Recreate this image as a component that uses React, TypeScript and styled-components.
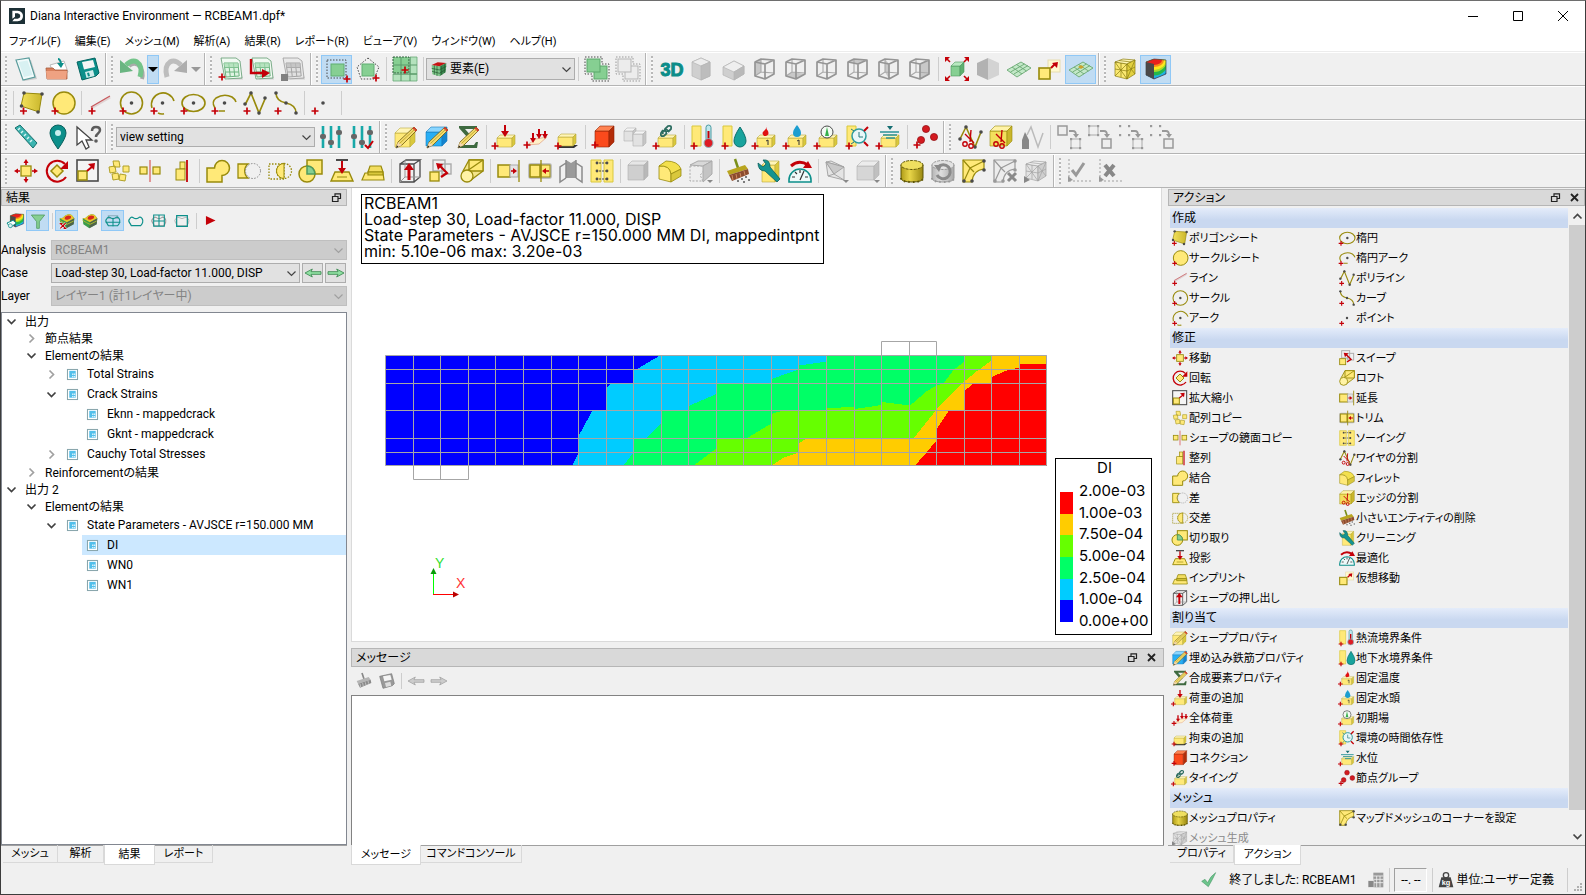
import React from "react";
import styled, { createGlobalStyle, css } from "styled-components";

/* ---------- palette ---------- */
const Y = "#ffe978";
const YD = "#d9c83c";
const YS = "#988a0c";
const R = "#c40008";
const T = "#0c8f8a";
const N = "#4a4a4a";
const GR = "#86cf92";
const G1 = "#e2e2e2";
const G2 = "#c6c6c6";

const uiFont = 'Roboto, "Noto Sans CJK JP", sans-serif';
const listFont = '"Liberation Sans", "Noto Sans CJK JP", sans-serif';
const sceneFont = 'Inter, "Liberation Sans", sans-serif';

const GlobalStyle = createGlobalStyle`
  * { box-sizing: border-box; }
  html, body { margin: 0; height: 100%; }
  body { font-family: ${uiFont}; font-size: 12px; line-height: 16px; color: #000; font-feature-settings: "palt"; background: #f0f0f0; overflow: hidden; }
  button, select, textarea { font: inherit; font-feature-settings: inherit; color: inherit; margin: 0; padding: 0; border: 0; background: none; border-radius: 0; }
  ul { list-style: none; margin: 0; padding: 0; }
  h1, h2 { margin: 0; font: inherit; }
`;

/* ---------- icon building blocks ---------- */
const Plus = ({ x = 3, y = 20 }: { x?: number; y?: number }) => (
  <path d={`M${x - 3.5} ${y}h7M${x} ${y - 3.5}v7`} stroke={R} strokeWidth="1.7" fill="none" />
);
const Dot = ({ x, y, r = 1.8, c = N }: { x: number; y: number; r?: number; c?: string }) => <circle cx={x} cy={y} r={r} fill={c} />;

const Block = ({ x, y, w, h, d = 4, c = [Y, "#fff5b8", YD, "#b8a93a"] }: { x: number; y: number; w: number; h: number; d?: number; c?: string[] }) => (
  <g stroke={c[3]} strokeWidth="0.6" strokeLinejoin="round">
    <path d={`M${x} ${y + d}h${w}v${h}h${-w}z`} fill={c[0]} />
    <path d={`M${x} ${y + d}l${d} ${-d}h${w}l${-d} ${d}z`} fill={c[1]} />
    <path d={`M${x + w} ${y + d}l${d} ${-d}v${h}l${-d} ${d}z`} fill={c[2]} />
  </g>
);
const grey = [G1, "#f4f4f4", G2, "#b4b4b4"];

const Arrow = ({ d, head, c = R, w = 2 }: { d: string; head: string; c?: string; w?: number }) => (
  <g>
    <path d={d} stroke={c} strokeWidth={w} fill="none" />
    <path d={head} fill={c} />
  </g>
);
const Sheet = ({ grey: g }: { grey?: boolean }) => (
  <g>
    <path d="M5 3.5h14l5 19H9z" fill="#bbb" opacity=".6" />
    <path d="M2 1h15l4 3 2 17-17 1z" fill={g ? "#e9e9e9" : "#f1faf2"} stroke={g ? "#9b9b9b" : "#5f9a70"} strokeWidth=".8" />
    <path d="M5 6h14l1.200 13L7 20z" fill={g ? "#e0e0e0" : "#dff3e3"} />
    <path d="M5 6h14M5.600 10.500h13.800M6.200 15h13.600M7 20l13.200-1M5 6l2 14M9.700 6l1.600 13.700M14.400 6l1.400 13.300M19 6l1.200 13" stroke={g ? "#a5a5a5" : "#6bb47f"} fill="none" strokeWidth="1" />
    <path d="M5 6h14l.400 4.500H5.600z" fill={g ? "#bbb" : "#a5dbb0"} opacity=".7" />
  </g>
);
const Wire = ({ face }: { face?: string }) => (
  <g fill="none" stroke="#959595" strokeWidth="1.7" strokeLinejoin="round">
    {face && <path d={face} fill="#c8c8c8" stroke="none" />}
    <path d="M8 2v13l13 1M8 15l-6 4" stroke="#aaa" strokeWidth="1.100" />
    <path d="M2 5l10 2v15L2 19zM2 5l6-3 13 1v14l-9 5M12 7l9-4" />
  </g>
);
const Pencil = () => (
  <g>
    <path d="M2 23l2-6L20 2l3 3L8 20z" fill="#f4dd70" stroke="#6d5a10" strokeWidth=".8" />
    <path d="M2 23l2-6 4 3z" fill="#f5d9b0" />
    <path d="M2 23l1-2.500 1.500 1.200z" fill="#222" />
    <path d="M18.500 3.500L20 2l3 3-1.500 1.500z" fill="#d33" />
    <path d="M5.500 18.500L21 4" stroke="#b79a20" strokeWidth=".8" />
  </g>
);
const Dotted = ({ d }: { d: string }) => <path d={d} fill="none" stroke={YS} strokeWidth="1.3" strokeDasharray="1.500 1.500" />;
const Plane = () => (
  <g>
    <path d="M0 13L14 5l10 6-14 9z" fill="#c3e8c8" stroke="#6aa873" strokeWidth=".9" />
    <path d="M3.500 15l14-8M7 17l14-8.500M5 10l10 7M9.500 7.500l10 6.500" stroke="#6aa873" strokeWidth=".9" fill="none" />
  </g>
);
const Scissors = () => (
  <g fill="none" stroke={R} strokeWidth="1.4">
    <path d="M13 5l-1 12M7 9l9 9" />
    <circle cx="7" cy="19" r="2.200" />
    <circle cx="13" cy="21" r="2.200" />
  </g>
);
const CopyArrow = () => (
  <g>
    <path d="M12 6h4q3 0 3 4" stroke="#999" strokeWidth="1.800" fill="none" />
    <path d="M16 9h6l-3 4z" fill="#999" />
  </g>
);
const corner = (x: number, y: number, s = 9) => (
  <g fill="#999">
    {[[x, y], [x + s, y], [x, y + s], [x + s, y + s]].map(([a, b]) => (
      <rect key={`${a}-${b}`} x={a - 1} y={b - 1} width="2.200" height="2.200" />
    ))}
  </g>
);
const CornerMesh = ({ g }: { g?: boolean }) => (
  <g stroke={g ? "#999" : YS} strokeWidth="1.200">
    <path d="M1 1h21v9q-11 1-12 13H1z" fill={g ? "#ececec" : Y} />
    <path d="M1 1l7 8 14-7M8 9L2 22M8 9l4 4" fill="none" />
    <g stroke="none">
      <Dot x={22} y={2} c={g ? "#999" : N} /><Dot x={22} y={11} c={g ? "#999" : N} /><Dot x={2} y={22} c={g ? "#999" : N} /><Dot x={10} y={22} c={g ? "#999" : N} />
    </g>
  </g>
);
const MeshCube = ({ g }: { g?: boolean }) => (
  <g stroke={g ? "#a2a2a2" : "#8a7c10"} strokeWidth=".7" strokeLinejoin="round">
    <path d="M2 5l12 2v15L2 19z" fill={g ? "#e2e2e2" : "#fbe972"} />
    <path d="M2 5l8-3 12 1-8 4z" fill={g ? "#eee" : "#fff6b8"} />
    <path d="M14 7l8-4v14l-8 5z" fill={g ? "#cfcfcf" : "#e2d040"} />
    <path d="M2 5l12 17M14 7L2 19M8 6v14M2 12l12 2M14 7l8 10M14 22l8-19M14 14l8-4M6 3.500l12 1.500" fill="none" />
  </g>
);
const Drum = ({ g }: { g?: boolean }) => (
  <g stroke={g ? "#999" : "#5f5606"} strokeWidth="1">
    <path d="M1 6v13q0 4 11 4t11-4V6z" fill={g ? "url(#drumGrey)" : "url(#drumYellow)"} />
    <ellipse cx="12" cy="6" rx="11" ry="4.500" fill={g ? "#e2e2e2" : "#efdf60"} strokeDasharray="3 1" />
    <path d="M1 19q0 4 11 4t11-4" fill="none" strokeWidth="2" strokeDasharray="1.500 3" />
  </g>
);
const CubeContour = () => (
  <g>
    <g clipPath="url(#cubeFace)">
      <path d="M0 0h24v24H0z" fill="#1a4fd0" />
      <ellipse cx="10" cy="3" rx="17" ry="18" fill="#1fb4e0" />
      <ellipse cx="10" cy="3" rx="15" ry="15.500" fill="#25b84a" />
      <ellipse cx="10" cy="3" rx="13" ry="12" fill="#a8dc28" />
      <ellipse cx="10" cy="3" rx="12" ry="10" fill="#fbe81c" />
      <ellipse cx="10" cy="3" rx="10" ry="7" fill="#f98a1a" />
      <ellipse cx="10" cy="3" rx="8" ry="5" fill="#e8201c" />
    </g>
    <path d="M2 5l8 2v15l-8-4z" fill="#4a4a4a" />
    <path d="M2 5l8-3 12 1v14l-12 5-8-4z" fill="none" stroke="#444" strokeWidth=".7" />
  </g>
);
const Deformed = ({ fault }: { fault?: boolean }) => (
  <g>
    <path d="M1 8q5 0 8-4 5-4 10-1l4 5-1 9-11 6-9-6z" fill="#3a9b4b" />
    <path d="M1 8q5 0 8-4 5-4 10-1l4 5-11 6z" fill="#e9c52a" />
    <path d="M9 6q4-4 9-1 1 4-5 5t-4-4z" fill="#d7261d" />
    <path d="M12 14l11-6-1 9-11 6z" fill="#57504a" opacity=".75" />
    <path d="M1 11q6 4 11 6l10-5" stroke="#a5b82c" strokeWidth="1.500" fill="none" />
    {fault && <path d="M2 16l8 7M10 15l-8 8M1 16h4M7 23h4" stroke="#fff" strokeWidth="3.500" />}
    {fault && <path d="M2 16l8 7M10 15l-8 8M1 16h4M7 23h4" stroke={R} strokeWidth="1.800" />}
  </g>
);
const bent = "M3 8q-3 3-1 6t3 5h14q2-2 3-5t-1-6q-3-3-5-1-4 3-8 0-3-2-5 1z";
const Broom = ({ g }: { g?: boolean }) => (
  <g>
    <path d="M9 0l3 9" stroke={g ? "#888" : "#7a8f1a"} strokeWidth="2.500" />
    <path d="M1 12L19 6l3 4L3 16z" fill={g ? "#b5b5b5" : "#b9a51f"} />
    <path d="M3 16l19-6 1 5-17 7z" fill={g ? "#8a8a8a" : "#8b4b2e"} />
    <path d="M6 16l1 5M10 15l1 5M14 14l1 4M18 12l1 4" stroke={g ? "#ddd" : "#d08a60"} strokeWidth="1" />
    {!g && <path d="M11 22h2M15 20h2M19 18h2M17 23h2M22 21h2" stroke="#555" strokeWidth="1.600" />}
  </g>
);
const LoadBox = ({ children }: { children?: React.ReactNode }) => (
  <g>
    <Block x={4} y={10} w={15} h={9} d={3} />
    {children}
    <Plus x={2} y={21} />
  </g>
);
const FaceTemp = ({ children }: { children?: React.ReactNode }) => (
  <g>
    <path d="M1 1h9v20H1z" fill={Y} stroke={YD} />
    {children}
    <Plus x={3} y={21} />
  </g>
);
const Sliders = ({ tick }: { tick?: boolean }) => (
  <g>
    <path d="M4 1v22M12 1v22M20 1v22" stroke="#18a8a8" strokeWidth="2.600" />
    <g fill="#666"><rect x="1" y="9" width="6" height="5" rx="2" /><rect x="9" y="15" width="6" height="5" rx="2" /><rect x="17" y="5" width="6" height="5" rx="2" /></g>
    {tick && <path d="M15 20l3 3 5-7" fill="none" stroke={R} strokeWidth="2" />}
  </g>
);

const art: Record<string, React.ReactNode> = {
  logo: <g><rect width="24" height="24" fill="#1c3036" /><path d="M5 4h8q8 1 8 8t-8 8H5l3-4h5q4-1 4-4t-4-4H9v5l-4 3z" fill="#fff" /></g>,
  newFile: <g><path d="M4 5l13-2 6 19-13 2z" fill="#aaa" opacity=".5" /><path d="M2 3l13-2 6 19-12 3z" fill="#f2fbfb" stroke="#5b9c9c" strokeWidth="1.200" /><path d="M4.500 5l9-1.500 5 14.500-8.500 2z" fill="#d8f1f2" /></g>,
  open: <g><path d="M5 8l14-4 4 11-13 4z" fill="#fff" stroke="#bbb" /><path d="M1 11h7l2 2h12v9H2z" fill="#d9805c" stroke="#a75a3c" strokeWidth=".8" /><path d="M1 14h21l-1 8H2z" fill="#efa282" /><Arrow d="M16 6q-1-4-3-4" head="M12 6h7l-3 5z" c={T} /></g>,
  save: <g><path d="M1 5l18-4 4 15-3 3-14 4z" fill={T} stroke="#056561" /><path d="M6 5l11-2 2 7-11 2.500z" fill="#f5f5f5" /><path d="M9 15l8-2 1.500 6-8 2z" fill="#cfeceb" /><path d="M11 16l2-.500 1 3.500-2 .500z" fill={T} /></g>,
  undo: <g><path d="M9 9q6-5 11 1 4 5 2 12" fill="none" stroke="#aaa" strokeWidth="4" /><path d="M6 8q6-6 11-3 6 4 3 15" fill="none" stroke="#74c48a" strokeWidth="5" /><path d="M0 3v13l13-2z" fill="#6ab581" /></g>,
  redo: <g><path d="M18 8Q12 2 7 5 1 9 4 20" fill="none" stroke="#bdbdbd" strokeWidth="5" /><path d="M24 3v13l-13-2z" fill="#adadad" /></g>,
  docAdd: <g><Sheet /><Plus x={3} y={20} /></g>,
  docSend: <g><Sheet /><Arrow d="M1 2v14h12" head="M12 12l8 4-8 5z" w={2.4} /></g>,
  docGrey: <g><Sheet grey /><rect x="0" y="17" width="7" height="7" fill="#808080" /></g>,
  selBox: <g><rect x="2" y="3" width="19" height="18" fill="none" stroke={N} strokeDasharray="1.500 1.500" /><rect x="6" y="7" width="13" height="12" fill={GR} stroke="#5fae70" /><Plus x={22} y={22} /></g>,
  selPoly: <g><path d="M12 1l11 9-5 12H5L1 10z" fill="none" stroke={N} strokeDasharray="1.500 1.500" /><rect x="6" y="7" width="12" height="12" fill={GR} stroke="#5fae70" /><Plus x={20} y={21} /></g>,
  gridSel: <g stroke="#67a877" strokeWidth=".8"><rect x="0" y="0" width="16" height="16" fill={GR} stroke="#2f5f3d" strokeWidth="1" strokeDasharray="2 1" /><path d="M0 17h24v7H0zM17 0h7v17h-7z" fill="#b4e2bd" /><path d="M8 0v24M0 8h24M17 0v24M0 17h24" stroke="#5b9a6a" strokeWidth="1" /><Plus x={12} y={13} /></g>,
  element: <g><path d="M1 6l12 2v15L2 20z" fill="#7ec98a" /><path d="M1 6l9-4 13 1-10 5z" fill="#c81414" /><path d="M13 8l10-5-1 14-9 6z" fill="#3f8f54" /><path d="M5 6.500v14M9 7.500v15M1 11l12 2.500M1.500 15.500l11.500 3M16 7v14M20 5v13M13 13l10-5M13 18l9-5" stroke="#24552f" fill="none" /></g>,
  overlap: <g><path d="M0 0h17v7h7v17H7v-7H0z" fill="none" stroke={N} strokeDasharray="1.500 1.500" /><rect x="9" y="9" width="13" height="13" fill={GR} stroke="#5aa76a" /><rect x="2" y="2" width="13" height="13" fill={GR} stroke="#5aa76a" /></g>,
  overlapOff: <g><path d="M0 0h17v7h7v17H7v-7H0z" fill="none" stroke="#999" strokeDasharray="1.500 1.500" /><rect x="9" y="9" width="13" height="13" fill="#ececec" stroke="#b5b5b5" /><rect x="2" y="2" width="13" height="13" fill="#ececec" stroke="#b5b5b5" /></g>,
  threeD: <text x="12" y="19" textAnchor="middle" fontFamily="Liberation Sans, sans-serif" fontWeight="700" fontSize="18" fill="#0b8d89" stroke="#0b8d89">3D</text>,
  solidTall: <g stroke="#b5b5b5" strokeWidth=".7"><path d="M10 1l9 4v14l-9 4-9-4V5z" fill="#cfcfcf" /><path d="M10 1l9 4-9 4-9-4z" fill="#ededed" /><path d="M10 9l9-4v14l-9 4z" fill="#bdbdbd" /></g>,
  solidFlat: <g stroke="#b5b5b5" strokeWidth=".7"><path d="M1 10l11-6 10 5v8l-10 6-11-5z" fill="#cfcfcf" /><path d="M1 10l11-6 10 5-10 6z" fill="#efefef" /><path d="M12 15l10-6v8l-10 6z" fill="#b9b9b9" /></g>,
  wire1: <Wire face="M2 5l6-3v13l-6 4z" />,
  wire2: <Wire face="M8 15l13 2-9 5-10-3z" />,
  wire3: <Wire />,
  wire4: <Wire face="M2 5l6-3 13 1-9 4z" />,
  wire5: <Wire face="M8 2l4 5v15l-4-7z" />,
  wire6: <Wire face="M12 7l9-4v14l-9 5z" />,
  fit: <g><Block x={6} y={5} w={9} h={10} d={4} c={["#86cf92", "#b9e9c0", "#5faf70", "#4f9960"]} /><path d="M1 1l4 4M23 1l-4 4M1 23l4-4M23 23l-4-4" stroke={R} strokeWidth="1.600" /><path d="M0 0h5L0 5zM24 0h-5l5 5zM0 24h5l-5-5zM24 24h-5l5-5z" fill={R} /></g>,
  halfHex: <g><path d="M12 1L1 6v12l11 5z" fill="#b2b2b2" /><path d="M12 1l11 5v12l-11 5z" fill="#d3d3d3" /></g>,
  plane: <Plane />,
  planePin: <g><Plane /><path d="M12 8l3 2-3 2-3-2z" fill="#c9a32a" /></g>,
  virtualMove: <g><rect x="10" y="3" width="12" height="12" fill="#fff9cf" stroke="#e6dcb0" /><rect x="1" y="11" width="11" height="11" fill={Y} stroke={YS} strokeWidth="1.600" /><Arrow d="M13 11l4-4" head="M20 5l-1 6-5-5z" /></g>,
  meshCube: <MeshCube />,
  contour: <CubeContour />,

  polySheet: <g><path d="M4 2l18 1-3 18L1 15z" fill="url(#sheetYellow)" stroke={YS} /><Dot x={4} y={2} /><Dot x={22} y={3} /><Dot x={18} y={21} /><Dot x={1.5} y={15} /><Plus x={3.5} y={20} /></g>,
  circleSheet: <g><circle cx="13" cy="12" r="11" fill={Y} stroke={YS} strokeWidth="1.500" /><Plus x={4} y={20} /></g>,
  line: <g><path d="M3 17L22 6" stroke="#caa" strokeWidth="3" opacity=".4" /><path d="M3 16L22 5" stroke="#c8585c" strokeWidth="1.100" /><Plus x={4} y={20} /></g>,
  circle: <g><circle cx="12.500" cy="12" r="11" fill="none" stroke={YS} strokeWidth="1.600" /><Dot x={12.5} y={12} /><Plus x={4} y={20} /></g>,
  arc: <g><path d="M2 17A11 11 0 1 1 24 10M8 22q3 1.500 6 .700" fill="none" stroke={YS} strokeWidth="1.600" /><Dot x={12.5} y={12} /><Plus x={4} y={20} /></g>,
  ellipse: <g><ellipse cx="12.500" cy="12" rx="11.500" ry="8.500" fill="none" stroke={YS} strokeWidth="1.600" /><Dot x={12.5} y={12} /><Plus x={3} y={20} /></g>,
  ellArc: <g><path d="M3 17Q-1 11 4 7q8-5 16-1 3 2 4 5M7 20h6" fill="none" stroke={YS} strokeWidth="1.600" /><Dot x={12.5} y={12} /><Plus x={3} y={20} /></g>,
  polyline: <g><path d="M2 14L8 2l8 20 6-14" fill="none" stroke={YS} strokeWidth="1.700" /><Dot x={8} y={2} /><Dot x={22} y={7} /><Dot x={2} y={13} /><Dot x={16} y={22} /><Plus x={4} y={20} /></g>,
  curve: <g><path d="M2 2q0 8 10 10t10 10" fill="none" stroke={YS} strokeWidth="1.600" /><Dot x={2} y={2} /><Dot x={12} y={12} /><Dot x={22} y={22} /><Plus x={4} y={20} /></g>,
  point: <g><Dot x={12} y={12} /><Plus x={4} y={20} /></g>,

  ruler: <g><path d="M1 3l5-3 17 18-4 5z" fill="#3cb4b0" stroke="#17706d" /><path d="M6 3l-2 2M9 6l-2 2M12 9l-2 2M15 12l-2 2M18 15l-2 2" stroke="#d8f4f3" strokeWidth="1.500" /></g>,
  pin: <g><path d="M13 24Q5 13 5 8a8 8 0 0 1 16 0q0 5-8 16z" fill={T} stroke="#0a5f5c" /><circle cx="13" cy="8" r="3" fill="#c9eeee" /></g>,
  whatsThis: <g><path d="M1 2v18l5-4 4 8 3-2-3-7h6z" fill="#fff" stroke="#444" strokeWidth="1.300" /><path d="M16 6q0-4 4-4t4 3q0 2-2 3.500t-2 3.500" fill="none" stroke="#5c5c5c" strokeWidth="2.500" /><Dot x={20} y={16} c="#5c5c5c" /></g>,
  sliders: <Sliders />,
  slidersOk: <Sliders tick />,
  shapeProp: <g><Block x={1} y={3} w={15} h={14} d={5} /><Pencil /></g>,
  rebarProp: <g><Block x={1} y={2} w={16} h={14} d={5} c={["#27aef5", "#8ad6ff", "#1484cf", "#1478b8"]} /><Pencil /></g>,
  sumProp: <g><path d="M3 1h18v5h-2l-1-2H9l7 8-8 8h10l2-3h2l-1 6H3v-2l8-9-8-9z" fill="#3e6a40" /><Pencil /></g>,
  load: <LoadBox><Arrow d="M12 0v7" head="M8 6h8l-4 6z" /></LoadBox>,
  globalLoad: <g><path d="M3 20l9-6 11-2-8 7z" fill="#fff0c8" stroke="#e8b79c" /><Arrow d="M9 8v6M15 4v8M21 6v6" head="M6 13h6l-3 5zM12 9h6l-3 5zM18 9h6l-3 5z" w={2} /><Plus x={3} y={20} /></g>,
  support: <g><path d="M4 20h19l-4 3H3z" fill="#333" /><Block x={3} y={9} w={15} h={9} d={3} /><Plus x={3} y={21} /></g>,
  connection: <g><Block x={3} y={1} w={14} h={16} d={5} c={["#fb4a1c", "#ff8352", "#b32c08", "#8f2406"]} /><Plus x={3} y={20} /></g>,
  split: <g><Block x={1} y={3} w={9} h={10} d={3} c={grey} /><Block x={10} y={6} w={10} h={12} d={3} c={grey} /></g>,
  tying: <LoadBox><path d="M9 9q-1-3 2-4t3 2M13 7q-3 0-2-3l3-3q4-1 3 3l-3 3M9 5l-2 3q-1 4 3 3l3-3" fill="none" stroke="#2c6c60" strokeWidth="1.800" /></LoadBox>,
  heatBound: <FaceTemp><rect x="15" y="0" width="5" height="16" rx="2.500" fill="#bfe7ec" stroke="#4a9aa2" /><path d="M17.500 6v11" stroke={R} strokeWidth="2" /><circle cx="17.500" cy="18" r="4.500" fill="#dd1c24" stroke="#8abcc2" /></FaceTemp>,
  waterBound: <FaceTemp><path d="M18 2q6 9 6 14a6 6 0 0 1-12 0q0-5 6-14z" fill="#18a39d" stroke="#0a706c" /></FaceTemp>,
  fixTemp: <LoadBox><path d="M13 0q1 4-2 6t0 5q6 0 4-5-2-2-2-6z" fill="#e01010" /><path d="M13 16l2-1v5" stroke="#333" fill="none" /></LoadBox>,
  fixHead: <LoadBox><path d="M13 0q4 5 4 8a4 4 0 0 1-8 0q0-3 4-8z" fill="#1c9ed0" /><path d="M13 16l2-1v5" stroke="#333" fill="none" /></LoadBox>,
  initial: <LoadBox><circle cx="12" cy="7" r="6" fill="#f4faf4" stroke={N} /><path d="M12 2l2 9h-4z" fill="#35b04a" /></LoadBox>,
  timeDep: <FaceTemp><circle cx="13" cy="11" r="7" fill="#e9f7f8" stroke="#2f9c9f" strokeWidth="1.500" /><path d="M13 7v5h4M5 4l3 2M5 19l3-2" stroke="#267a7d" fill="none" /><path d="M18 6l4-4M18 17l4 4" stroke={R} strokeWidth="2" /></FaceTemp>,
  waterLevel: <LoadBox><path d="M10 1h6l-3 4z" fill="#156e72" /><path d="M3 7h19M6 10h14M9 13h9" stroke="#2a9398" strokeWidth="1.400" /></LoadBox>,
  nodes: <g fill="#d31a20" stroke="#8e0c10" strokeWidth=".7"><circle cx="12" cy="4" r="3.600" /><circle cx="20" cy="12" r="3.600" /><circle cx="7" cy="15" r="3.600" /><Plus x={3} y={20} /></g>,
  cutWire: <g><path d="M2 14L8 2l9 20 6-15" fill="none" stroke={YS} strokeWidth="1.600" /><Dot x={8} y={2} /><Dot x={23} y={7} /><Dot x={2} y={14} /><Dot x={17} y={22} /><Scissors /></g>,
  cutEdge: <g><Block x={1} y={1} w={17} h={15} d={5} c={["#f3df5c", "#fff3a8", "#c9b62c", YS]} /><Scissors /></g>,
  glue: <g><path d="M7 10L11 2l7 20 5-14" fill="none" stroke="#bbb" strokeWidth="1.500" /><path d="M2 15l3-8 4 8v9H2z" fill="#888" /></g>,
  copy1: <g><rect x="1" y="1" width="9" height="9" fill="#eee" stroke="#999" strokeWidth="1.500" /><CopyArrow /><rect x="14" y="14" width="9" height="9" fill="none" stroke="#aaa" />{corner(14, 14)}</g>,
  copy2: <g><rect x="1" y="1" width="9" height="9" fill="none" stroke="#aaa" />{corner(1, 1)}<CopyArrow /><rect x="14" y="14" width="9" height="9" fill="#eee" stroke="#999" strokeWidth="1.500" /></g>,
  copy3: <g>{corner(1, 1)}<CopyArrow /><rect x="14" y="14" width="9" height="9" fill="none" stroke="#aaa" />{corner(14, 14)}</g>,
  copy4: <g>{corner(1, 1)}<CopyArrow /><rect x="14" y="14" width="9" height="9" fill="#eee" stroke="#999" strokeWidth="1.500" /></g>,

  move: <g><rect x="7" y="7" width="10" height="10" fill={Y} stroke={YS} strokeWidth="1.300" /><path d="M12 3v3M12 18v3M3 12h3M18 12h3" stroke={R} strokeWidth="1.600" /><path d="M9.500 4h5L12 0zM9.500 20h5L12 24zM4 9.500v5L0 12zM20 9.500v5l4-2.500z" fill={R} /></g>,
  rotate: <g><path d="M12 6l6 6-6 6-6-6z" fill={Y} stroke={YS} strokeWidth="1.500" /><path d="M20 5A10.500 10.500 0 1 0 21 18" fill="none" stroke={R} strokeWidth="2" /><path d="M23 2v8h-8z" fill={R} /></g>,
  scale: <g><rect x="1" y="1" width="21" height="21" fill="#f4f4f4" stroke={N} strokeWidth="1.600" /><rect x="2" y="12" width="9" height="9" fill={Y} stroke={YS} strokeWidth="1.500" /><Arrow d="M11 12l6-5" head="M19 4l-1 7-6-6z" /></g>,
  array: <g fill={Y} stroke="#b0a028"><path d="M6 2h6l1 6H7zM2 8l6-1 1 6-6 1zM16 7h6v6h-6zM5 15l6-1 1 6-6 1zM13 15l6 1-1 6-6-1z" /></g>,
  mirror: <g><path d="M12 1v22" stroke="#d77" strokeWidth="1.500" /><rect x="2" y="8" width="7" height="7" fill={Y} stroke={YS} strokeWidth="1.200" /><rect x="15" y="8" width="7" height="7" fill={Y} stroke={YS} strokeWidth="1.200" /></g>,
  align: <g><path d="M18 1v22" stroke={R} strokeWidth="1.800" /><rect x="11" y="3" width="5" height="7" fill={Y} stroke={YS} /><rect x="7" y="10" width="9" height="11" fill={Y} stroke={YS} /></g>,
  unite: <path d="M1 9h7.500A7.500 7.500 0 1 1 16 16.500V23H1z" fill={Y} stroke={YS} strokeWidth="1.500" />,
  subtract: <g><path d="M1 5h10a9 9 0 0 0 0 14H1z" fill={Y} stroke={YS} strokeWidth="1.300" /><circle cx="16" cy="12" r="7.500" fill="none" stroke="#888" strokeDasharray="1.500 1.500" /></g>,
  intersect: <g><Dotted d="M1 5h15v15H1z" /><Dotted d="M16 4.500a7.500 7.500 0 1 1 0 15a7.500 7.500 0 1 1 0-15" /><path d="M16 4.500v15a7.500 7.500 0 0 1 0-15z" fill={Y} stroke={YS} /></g>,
  clip: <g stroke={YS} strokeWidth="1.500"><rect x="8" y="1" width="15" height="14" fill={Y} /><circle cx="8" cy="15" r="8" fill={Y} /><path d="M8 7q7 0 8 8H8z" fill={GR} stroke="#4f9a60" /></g>,
  project: <g><path d="M6 1h12" stroke={N} strokeWidth="2" /><path d="M5 13h14l4 9H1z" fill={Y} stroke={YS} strokeWidth="1.400" /><path d="M7 18h10" stroke={YS} /><Arrow d="M12 2v9" head="M8 9h8l-4 6z" /></g>,
  imprint: <g stroke={YS} strokeWidth="1.200"><path d="M4 14h18l1 7H1z" fill={Y} /><path d="M9 7h11l2 6H7z" fill="#f2dd60" /><path d="M7 13h15v3H7z" fill={YD} /></g>,
  extrude: <g><path d="M2 5h14v18H2zM2 5l6-4h14l-6 4M22 1v17l-6 5" fill="none" stroke={N} strokeWidth="1.300" /><path d="M7 1v17h15M7 18l-5 5" fill="none" stroke="#999" /><Arrow d="M11 21V9" head="M6 11h10l-5-7z" w={3} /></g>,
  sweep: <g><rect x="4" y="1" width="12" height="11" fill="none" stroke="#aaa" strokeWidth="1.400" /><rect x="13" y="5" width="9" height="10" fill="none" stroke="#aaa" strokeWidth="1.400" /><rect x="1" y="13" width="9" height="9" fill={Y} stroke={YS} strokeWidth="1.300" /><path d="M12 18l6-4-7-7" stroke={R} strokeWidth="2.200" fill="none" /><path d="M7 4l7 1-5 6z" fill={R} /></g>,
  loft: <g stroke={YS} strokeWidth="1.300" strokeLinejoin="round"><path d="M9 1h14v11L11 21 3 12z" fill="#f4e58a" /><path d="M9 1h14v11H9z" fill={Y} /><path d="M23 1L7 12" /><circle cx="7" cy="17" r="6" fill="#fff3a6" /></g>,
  extend: <g><rect x="1" y="6" width="12" height="12" fill={Y} stroke={YS} strokeWidth="1.500" /><rect x="13" y="6" width="8" height="12" fill="#e4e4e4" stroke="#aaa" /><path d="M22 1v22" stroke={YS} strokeWidth="1.300" /><Arrow d="M14 12h3" head="M16 9l4 3-4 3z" w={1.5} /></g>,
  trim: <g><rect x="0" y="4" width="24" height="16" rx="3" fill="#888" opacity=".45" /><rect x="2" y="6" width="10" height="12" fill={Y} stroke={YS} strokeWidth="1.500" /><rect x="13" y="6" width="9" height="12" fill={Y} stroke={YS} /><path d="M13 1v22" stroke={YS} strokeWidth="1.300" /><Arrow d="M21 12h-3" head="M18 9l-4 3 4 3z" w={1.5} /></g>,
  fold: <g fill="none" stroke="#8a8a8a"><path d="M7 1l5 3 5-3v18H7z" fill="#9a9a9a" stroke="none" /><path d="M7 4L1 8v15l6-4M17 4l6 4v15l-6-4M7 1v18M17 1v18" strokeWidth="1.500" /></g>,
  sew: <g><path d="M1 1h10v22H1zM14 1h9v22h-9z" fill={Y} stroke={YD} /><path d="M6 4h12M6 12h12M6 20h12" stroke={N} strokeDasharray="2 1" /><Dot x={7} y={4} r={1.4} /><Dot x={17} y={4} r={1.4} /><Dot x={7} y={12} r={1.4} /><Dot x={17} y={12} r={1.4} /><Dot x={7} y={20} r={1.4} /><Dot x={17} y={20} r={1.4} /></g>,
  solidGrey: <Block x={1} y={2} w={16} h={15} d={4} c={["#cfcfcf", "#e6e6e6", "#b8b8b8", "#b0b0b0"]} />,
  fillet: <g stroke={YS} strokeWidth=".8" strokeLinejoin="round"><path d="M1 7q11-1 12 8v8L1 20z" fill={Y} /><path d="M1 7l7-5q12 0 15 8l-10 5Q12 6 1 7z" fill="#f3e04e" /><path d="M13 15l10-5v7l-10 6z" fill={YD} /></g>,
  chamfer: <g stroke="#aaa"><path d="M1 7h13q2 6-3 9l3 6H1z" fill="#eee" strokeDasharray="2 1.500" /><path d="M1 6l8-4h14l-9 5z" fill="#d8d8d8" /><path d="M14 7l9-5v13l-9 8z" fill="#c4c4c4" /><path d="M18 21h6l-3 3z" fill="#888" stroke="none" /></g>,
  broom: <Broom />,
  wrench: <g><Block x={5} y={2} w={13} h={17} d={4} /><path d="M1 4l5 4 3-3-3-4q7-1 7 7l10 12-3 3L8 12q-7 0-7-8z" fill="#149490" stroke="#0a5f5c" strokeWidth=".8" /></g>,
  gauge: <g><path d="M1 21a11 11 0 0 1 22 0v2H1z" fill="#eef9f9" stroke={T} strokeWidth="1.600" /><path d="M12 21l4-9M4 18h3M7 13l2 2M12 11v3M20 18h-3" stroke="#333" fill="none" strokeWidth="1.200" /><path d="M3 7q8-7 17-1" stroke={R} strokeWidth="3" fill="none" /><path d="M24 9l-9 0 5-7z" fill={R} /></g>,
  faceCut: <g stroke="#a0a0a0" strokeWidth=".9" strokeLinejoin="round"><path d="M1 3l5-1 13 6v13L3 17z" fill="#e4e4e4" /><path d="M1 3l18 5M1 3l8 12 10 6M9 15l-6 2" fill="none" /><path d="M1 3l18 5-10 7z" fill="#c9c9c9" /><path d="M18 21h6l-3 3z" fill="#888" stroke="none" /></g>,
  solidMenu: <g><Block x={1} y={2} w={17} h={14} d={5} c={["#d6d6d6", "#ececec", "#c0c0c0", "#b0b0b0"]} /><path d="M18 21h6l-3 3z" fill="#888" /></g>,
  drum: <Drum />,
  drumRefresh: <g><Drum g /><path d="M7 8a7 7 0 1 1-1 8" fill="none" stroke="#8a8a8a" strokeWidth="3" /><path d="M3 6l8 0-3 7z" fill="#8a8a8a" /></g>,
  corners: <CornerMesh />,
  cornersOff: <g><CornerMesh g /><path d="M15 14l8 8M23 14l-8 8" stroke="#8a8a8a" strokeWidth="3" /></g>,
  meshGrey: <g><MeshCube g /><path d="M0 17v7l6-3z" fill="#888" /></g>,
  accept: <g><path d="M1 0v22M1 22h22" stroke="#bbb" strokeDasharray="2 2" fill="none" strokeWidth="1.500" /><path d="M0 17v6l5-2z" fill="#999" /><path d="M4 11l4 5L16 4" fill="none" stroke="#999" strokeWidth="3" /></g>,
  reject: <g><path d="M1 0v22M1 22h22" stroke="#bbb" strokeDasharray="2 2" fill="none" strokeWidth="1.500" /><path d="M0 17v6l5-2z" fill="#999" /><path d="M6 6l9 11M15 6L6 17" fill="none" stroke="#888" strokeWidth="4" /></g>,

  resOut: <g><g transform="translate(3 -1)"><CubeContour /></g><path d="M0 15l9-4 5 4-9 7z" fill="#fff" stroke={T} strokeWidth="1.500" /><circle cx="5" cy="19" r="3" fill="#d7f1f1" stroke={T} /></g>,
  funnel: <path d="M2 3h20l-8 10v10h-4V13z" fill={GR} stroke="#4f9a60" strokeWidth="1.200" />,
  resFault: <Deformed fault />,
  resDef: <Deformed />,
  both: <g fill="none" stroke={T} strokeWidth="1.600"><path d="M5 4h14v4H5z" stroke="#8ab" /><path d={bent} /><path d="M1 14h22M12 8v12" /></g>,
  bentOnly: <path d={bent} fill="none" stroke={T} strokeWidth="1.800" />,
  boxMesh: <g fill="none" stroke={T} strokeWidth="1.600"><path d={bent} stroke="#999" /><path d="M4 3h16v17H4zM4 12h16M12 3v17" /></g>,
  boxOnly: <g fill="none"><path d={bent} stroke="#999" /><path d="M4 4h16v16H4z" stroke={T} strokeWidth="1.800" /></g>,
  play: <path d="M2 2l21 10L2 22z" fill={R} />,
  left: <path d="M0 12l11-6-2 4h15v4H9l2 4z" fill="#8fe0a2" stroke="#3d8a52" strokeWidth="1.300" />,
  right: <path d="M24 12L13 6l2 4H0v4h15l-2 4z" fill="#8fe0a2" stroke="#3d8a52" strokeWidth="1.300" />,
  leftOff: <path d="M0 12l11-6-2 4h15v4H9l2 4z" fill="#ccc" stroke="#999" />,
  rightOff: <path d="M24 12L13 6l2 4H0v4h15l-2 4z" fill="#ccc" stroke="#999" />,
  broomOff: <Broom g />,
  saveOff: <g><path d="M1 5l18-4 4 15-3 3-14 4z" fill="#999" stroke="#777" /><path d="M6 5l11-2 2 7-11 2.500z" fill="#f5f5f5" /><path d="M9 15l8-2 1.500 6-8 2z" fill="#ddd" /></g>,
  data: <g><rect x="1" y="1" width="22" height="22" fill="#fff" stroke="#86a4ab" strokeWidth="2.200" /><rect x="5" y="4" width="14" height="15" fill="#52bfea" /><path d="M11 10h3v3h-3zM15 10h3v3h-3zM11 15h3v3h-3zM15 15h3v3h-3z" fill="#d9f1fb" /></g>,
  done: <path d="M1 14l5-3 4 5Q14 6 22 1q-4 9-11 21z" fill="#6cc48c" stroke="#3f8f5c" strokeWidth=".8" />,
  tableOff: <g><path d="M8 1h15v22H8z" fill="#999" /><path d="M8 6h15M8 11h15M8 16h15M13 6v17M18 6v17" stroke="#eee" strokeWidth="1.300" /><rect x="0" y="13" width="9" height="10" fill="#888" stroke="#f0f0f0" /></g>,
  weight: <g><path d="M5 8h14l4 15H1z" fill="#444" /><circle cx="12" cy="5" r="4" fill="none" stroke="#444" strokeWidth="2" /><text x="12" y="20" textAnchor="middle" fontFamily="Liberation Sans, sans-serif" fontSize="11" fontWeight="700" fill="#fff">kg</text></g>,
};

const Svg = styled.svg`
  display: block;
  flex: none;
  overflow: visible;
`;
const Icon = ({ name, size = 24 }: { name: string; size?: number }) => (
  <Svg width={size} height={size} viewBox="0 0 24 24" aria-hidden="true">{art[name]}</Svg>
);
const Chevron = ({ color = "#444", dir = "down", weight = 1.2 }: { color?: string; dir?: "down" | "up" | "right"; weight?: number }) => (
  <Svg width="9" height="9" viewBox="0 0 9 9" aria-hidden="true">
    <path d={dir === "down" ? "M.500 2.500l4 4 4-4" : dir === "up" ? "M.500 6.500l4-4 4 4" : "M2.500 .500l4 4-4 4"} fill="none" stroke={color} strokeWidth={weight} />
  </Svg>
);
const FloatGlyph = () => (
  <Svg width="9" height="9" viewBox="0 0 9 9"><path d="M3 3V.800h5.500V5.500H6.500M.500 3.500h5.500v5H.500z" fill="none" stroke="#222" strokeWidth="1.200" /></Svg>
);
const CrossGlyph = () => (
  <Svg width="9" height="9" viewBox="0 0 9 9"><path d="M1 1l7 7M8 1l-7 7" stroke="#222" strokeWidth="1.800" /></Svg>
);

/* ---------- window ---------- */
const Window = styled.div`
  display: flex;
  flex-direction: column;
  height: 100vh;
  background: #f0f0f0;
  border: 1px solid #3c3c3c;
  border-top-color: #6e6e6e;
`;
const TitleBar = styled.header`
  display: flex;
  align-items: center;
  height: 30px;
  flex: none;
  padding-left: 8px;
  background: #fff;
`;
const Caption = styled.h1`
  flex: 1;
  padding-left: 5px;
`;
const CaptionButton = styled.button`
  width: 45px;
  height: 28px;
  display: grid;
  place-items: center;
`;
const MenuBar = styled.nav`
  display: flex;
  height: 21px;
  flex: none;
  padding-left: 1px;
  background: #fff;
  border-bottom: 1px solid #ececec;
  font-size: 11px;
`;
const MenuItem = styled.button`
  padding: 2px 7px 0;
  white-space: nowrap;
`;

/* ---------- toolbars ---------- */
const Bar = styled.div`
  display: flex;
  height: 34px;
  flex: none;
  border-top: 1px solid #fff;
  border-bottom: 1px solid #b4b4b4;
`;
const Group = styled.div<{ $last?: boolean }>`
  display: flex;
  align-items: center;
  padding-right: 2px;
  ${(p) => !p.$last && css`border-right: 1px solid #b4b4b4; box-shadow: 1px 0 0 #fff; margin-right: 1px;`}
`;
const Grip = styled.span`
  width: 9px;
  height: 26px;
  border-left: 4px solid transparent;
  border-right: 3px solid transparent;
  background: repeating-linear-gradient(to bottom, #b8b8b8 0 2px, #f8f8f8 2px 4px);
  background-clip: padding-box;
`;
const ToolButton = styled.button<{ $on?: boolean; $small?: boolean }>`
  width: ${(p) => (p.$small ? 23 : 31)}px;
  height: ${(p) => (p.$small ? 21 : 29)}px;
  flex: none;
  display: grid;
  place-items: center;
  ${(p) => p.$on && css`background: #c0dcf3; border: 1px solid #90c8f6;`}
`;
const DropButton = styled.button<{ $on?: boolean }>`
  width: 12px;
  height: 29px;
  display: grid;
  place-items: center;
  ${(p) => p.$on && css`background: #c0dcf3; border: 1px solid #90c8f6;`}
`;
const Sep = styled.span<{ $h?: number }>`
  flex: none;
  width: 6px;
  height: ${(p) => p.$h ?? 24}px;
  border-left: 3px solid transparent;
  border-right: 2px solid transparent;
  background: #cdcdcd;
  background-clip: padding-box;
`;
const ComboBox = styled.span<{ $w?: number }>`
  position: relative;
  display: flex;
  align-items: center;
  flex: ${(p) => (p.$w ? "none" : 1)};
  width: ${(p) => (p.$w ? `${p.$w}px` : "auto")};
  min-width: 0;
  > svg:last-child { position: absolute; right: 4px; pointer-events: none; }
`;
const ComboIcon = styled.span`
  position: absolute;
  left: 5px;
  pointer-events: none;
`;
const Select = styled.select<{ $icon?: boolean; $h: number }>`
  appearance: none;
  width: 100%;
  height: ${(p) => p.$h}px;
  padding: 0 16px 0 ${(p) => (p.$icon ? 23 : 3)}px;
  border: 1px solid #adadad;
  background: #e1e1e1;
  opacity: 1;
  &:disabled { background: #cccccc; border-color: #bfbfbf; color: #838383; }
`;

type Combo = { label: string; value: string; w: number; h: number; icon?: string };
type Tool = string | Combo | { drop: string; on?: boolean };
type GroupSpec = Tool[];
/* "|" is a separator, a leading "*" marks a pressed button */
const rows: GroupSpec[][] = [
  [
    ["newFile", "open", "save"],
    ["undo", { drop: "#000", on: true }, "redo", { drop: "#999" }],
    ["docAdd", "docSend", "docGrey"],
    ["*selBox", "selPoly", "|", "gridSel", "|", { label: "選択対象", value: "要素(E)", w: 149, h: 22, icon: "element" }, "|", "overlap", "overlapOff"],
    ["threeD", "solidTall", "solidFlat", "wire1", "wire2", "wire3", "wire4", "wire5", "wire6", "|", "fit", "halfHex", "plane", "virtualMove", "*planePin"],
    ["meshCube", "*contour"],
  ],
  [["|", "polySheet", "circleSheet", "|", "line", "circle", "arc", "ellipse", "ellArc", "polyline", "curve", "|", "point", "|"]],
  [
    ["ruler", "pin", "whatsThis"],
    [{ label: "表示設定", value: "view setting", w: 199, h: 20 }, "sliders", "slidersOk"],
    ["shapeProp", "rebarProp", "sumProp", "|", "load", "globalLoad", "support", "|", "connection", "split", "tying", "|", "heatBound", "waterBound", "fixTemp", "fixHead", "initial", "timeDep", "waterLevel", "|", "nodes"],
    ["cutWire", "cutEdge", "glue", "|", "copy1", "copy2", "copy3", "copy4"],
  ],
  [
    ["move", "rotate", "scale", "array", "mirror", "align", "|", "unite", "subtract", "intersect", "clip", "project", "imprint", "|", "extrude", "sweep", "loft", "|", "extend", "trim", "fold", "sew", "|", "solidGrey", "fillet", "chamfer", "|", "broom", "wrench", "gauge", "|", "faceCut", "solidMenu"],
    ["drum", "drumRefresh", "corners", "cornersOff", "meshGrey"],
    ["accept", "reject"],
  ],
];

const ToolItem = ({ t }: { t: Tool }) => {
  if (t === "|") return <Sep />;
  if (typeof t === "string") {
    const on = t[0] === "*";
    const name = on ? t.slice(1) : t;
    return <ToolButton $on={on} aria-pressed={on} aria-label={name}><Icon name={name} /></ToolButton>;
  }
  if ("drop" in t) {
    return (
      <DropButton $on={t.on} aria-label="history">
        <Svg width="10" height="5" viewBox="0 0 10 5"><path d="M0 0h10L5 5z" fill={t.drop} /></Svg>
      </DropButton>
    );
  }
  return (
    <ComboBox $w={t.w}>
      {t.icon && <ComboIcon><Icon name={t.icon} size={16} /></ComboIcon>}
      <Select aria-label={t.label} $icon={!!t.icon} $h={t.h}><option>{t.value}</option></Select>
      <Chevron />
    </ComboBox>
  );
};

/* ---------- docks ---------- */
const Main = styled.main`
  flex: 1;
  min-height: 0;
  display: grid;
  grid-template-columns: 346px minmax(0, 1fr) 417px;
  column-gap: 4px;
`;
const Dock = styled.section`
  display: flex;
  flex-direction: column;
  min-height: 0;
  min-width: 0;
`;
const SideDock = styled(Dock)`
  padding-top: 1px;
`;
const DockTitle = styled.div<{ $tall?: boolean }>`
  flex: none;
  display: flex;
  align-items: center;
  height: ${(p) => (p.$tall ? 19 : 17)}px;
  padding: 0 ${(p) => (p.$tall ? 2 : 0)}px 0 4px;
  border: 1px solid #b6b6b6;
  background: #d9d9d9;
  h2 { flex: 1; }
`;
const DockButton = styled.button`
  display: grid;
  place-items: center;
  width: 19px;
  height: 15px;
`;
const PanelTools = styled.div`
  display: flex;
  align-items: center;
  padding: 4px 0 0 2px;
  height: 25px;
`;
const Form = styled.div`
  display: grid;
  grid-template-columns: 50px minmax(0, 1fr);
  align-items: center;
  row-gap: 3px;
  padding: 9px 0 6px;
`;
const FieldRow = styled.div`
  display: flex;
  gap: 2px;
  min-width: 0;
  padding-right: 1px;
`;
const StepButton = styled.button`
  width: 21px;
  height: 20px;
  display: grid;
  place-items: center;
  border: 1px solid #adadad;
  background: #e1e1e1;
`;
const Tree = styled.ul`
  flex: 1;
  min-height: 0;
  overflow: hidden;
  background: #fff;
  border: 1px solid #828790;
`;
const TreeRow = styled.li<{ $level: number; $tall?: boolean }>`
  display: flex;
  height: ${(p) => (p.$tall ? 20 : 17)}px;
  padding-left: ${(p) => p.$level * 20}px;
`;
const Branch = styled.span`
  width: 20px;
  padding-right: 2px;
  display: grid;
  place-items: center;
  flex: none;
`;
const TreeLabel = styled.span<{ $on?: boolean; $icon?: boolean }>`
  flex: 1;
  display: flex;
  align-items: center;
  gap: 9px;
  padding-left: ${(p) => (p.$icon ? 5 : 3)}px;
  white-space: nowrap;
  background: ${(p) => (p.$on ? "#cce8ff" : "transparent")};
`;
type Node = { l: number; t: string; open?: boolean; leaf?: boolean; icon?: boolean; on?: boolean };
const tree: Node[] = [
  { l: 0, t: "出力", open: true },
  { l: 1, t: "節点結果" },
  { l: 1, t: "Elementの結果", open: true },
  { l: 2, t: "Total Strains", icon: true },
  { l: 2, t: "Crack Strains", icon: true, open: true },
  { l: 3, t: "Eknn - mappedcrack", icon: true, leaf: true },
  { l: 3, t: "Gknt - mappedcrack", icon: true, leaf: true },
  { l: 2, t: "Cauchy Total Stresses", icon: true },
  { l: 1, t: "Reinforcementの結果" },
  { l: 0, t: "出力 2", open: true },
  { l: 1, t: "Elementの結果", open: true },
  { l: 2, t: "State Parameters - AVJSCE r=150.000 MM", icon: true, open: true },
  { l: 3, t: "DI", icon: true, leaf: true, on: true },
  { l: 3, t: "WN0", icon: true, leaf: true },
  { l: 3, t: "WN1", icon: true, leaf: true },
];

const Tabs = styled.div<{ $pad?: number }>`
  flex: none;
  display: flex;
  align-items: flex-start;
  height: 20px;
  padding-left: ${(p) => p.$pad ?? 0}px;
  box-shadow: inset 0 1px 0 #a0a0a0;
  font-size: 11px;
`;
const Tab = styled.button<{ $on?: boolean; $w: number }>`
  min-width: ${(p) => p.$w}px;
  height: ${(p) => (p.$on ? 20 : 18)}px;
  padding-top: 1px;
  border: 1px solid #d9d9d9;
  border-top: 0;
  border-left-width: ${(p) => (p.$on ? 1 : 0)}px;
  background: ${(p) => (p.$on ? "#fff" : "transparent")};
  white-space: nowrap;
`;

/* ---------- 3D view ---------- */
const Viewport = styled.div`
  position: relative;
  flex: 1;
  min-height: 0;
  margin-right: 2px;
  background: #fff;
  border: 1px solid #dadada;
  border-top: 0;
  font-family: ${sceneFont};
  font-size: 15px;
  line-height: 16px;
  overflow: hidden;
`;
const Annotation = styled.div`
  position: absolute;
  left: 9px;
  top: 6px;
  width: 463px;
  height: 70px;
  padding: 0 2px;
  border: 1px solid #000;
  font-size: 16px;
  white-space: nowrap;
`;
const Beam = styled.svg`
  position: absolute;
  left: 32px;
  top: 152px;
`;
const Triad = styled.svg`
  position: absolute;
  left: 76px;
  top: 366px;
`;
const Legend = styled.div`
  position: absolute;
  right: 9px;
  bottom: 6px;
  width: 97px;
  height: 177px;
  border: 1px solid #000;
  padding: 1px 2px 1px 4px;
`;
const LegendTitle = styled.div`
  text-align: center;
`;
const LegendBody = styled.div`
  display: flex;
  gap: 6px;
  padding-top: 7px;
`;
const Ramp = styled.div`
  flex: none;
  display: grid;
  grid-template-rows: repeat(6, 1fr);
  width: 13px;
  height: 130px;
  margin-top: 9px;
`;
const Swatch = styled.span<{ $c: string }>`
  background: ${(p) => p.$c};
`;
const LegendLabels = styled.div`
  display: flex;
  flex-direction: column;
  justify-content: space-between;
  height: 146px;
`;
const cols = [385, 413, 440, 468, 495, 523, 551, 578, 606, 633, 661, 688, 716, 743, 771, 798, 826, 854, 881, 909, 936, 964, 991, 1019, 1046].map((x) => x + 0.5);
const rowsY = [355.5, 369.5, 383.5, 410.5, 438.5, 452.5, 465.5];
const right = "1046.5,465.5 1046.5,355.5 ";
const bands: [string, string][] = [
  ["#00ccff", right + "660,355.5 637,369 633.5,369.5 633.5,383.5 611,384 607,387 606.5,410.5 592.5,410.5 578.5,436 578.5,452.5 572.5,465.5"],
  ["#00ff66", right + "826.5,355.5 826.5,361.5 798.5,365.5 798.5,369.5 771.5,379 771.5,383.5 716.5,383.5 716.5,394 688.5,406 688.5,410.5 661.5,410.5 661.5,422.5 645.5,438.5 633.5,438.5 633.5,452.5 623.5,465.5"],
  ["#66ff00", right + "964.5,355.5 964.5,361.5 953.5,370 943.5,383.5 936.5,385.5 926.5,391.5 910,405.5 881.5,402 881.5,405 855,409 855,407 826.5,408 826.5,410.5 783,410.5 771.5,414 771.5,423.5 746.5,438.5 716.5,438.5 716.5,448.5 693.5,465.5"],
  ["#ffcc00", right + "991.5,355.5 991.5,360.5 976.5,371.5 961.5,383.5 936.5,409.5 913.5,438.5 806.5,438.5 798.5,443.5 798.5,452.5 783,458 771.5,465.5"],
  ["#ff0000", "1046.5,465.5 1046.5,363.5 1019.5,363.5 1019.5,367.5 1008,370 991.5,377 991.5,383.5 973.5,383.5 964.5,391 964.5,410.5 949,410.5 936.5,429 936.5,440.5 926.5,452.5 915,465.5"],
];
const grid =
  cols.map((x) => `M${x} 355.5V465.5`).join("") +
  rowsY.map((y) => `M385.5 ${y}H1046.5`).join("") +
  "M413.5 465.5v14h55v-14M440.5 465.5v14M881.5 355.5v-14h55v14M909.5 355.5v-14";

const MessagePanel = styled(Dock)`
  height: 217px;
  margin-top: 6px;
  flex: none;
`;
const MessageTools = styled.div`
  display: flex;
  align-items: center;
  height: 28px;
  padding-left: 1px;
`;
const MessageText = styled.textarea`
  flex: 1;
  resize: none;
  border: 1px solid #828282;
  border-bottom: 0;
  background: #fff;
`;

/* ---------- action panel ---------- */
const ActionBody = styled.div`
  flex: 1;
  min-height: 0;
  display: flex;
  padding: 2px 0 0 2px;
`;
const ActionList = styled.div`
  flex: 1;
  min-width: 0;
  overflow: hidden;
  font-family: ${listFont};
  font-size: 11px;
`;
const SectionTitle = styled.h2`
  height: 20px;
  padding-left: 2px;
  line-height: 20px;
  font-size: 12px;
  background: linear-gradient(#e4ecfa, #c9d8f0 60%);
`;
const ActionGrid = styled.div`
  display: grid;
  grid-template-columns: 167px minmax(0, 1fr);
  grid-auto-rows: 20px;
`;
const Action = styled.button`
  display: flex;
  align-items: center;
  gap: 1px;
  padding-left: 2px;
  text-align: left;
  white-space: nowrap;
  &:disabled { color: #8a8a8a; }
`;
const ScrollBar = styled.div`
  width: 16px;
  margin-left: 1px;
  flex: none;
  display: flex;
  flex-direction: column;
`;
const ScrollButton = styled.button`
  height: 17px;
  display: grid;
  place-items: center;
`;
const ScrollTrack = styled.div`
  flex: 1;
`;
const Thumb = styled.div`
  height: 97%;
  background: #cdcdcd;
`;
type Pair = [string, string, string?, string?];
const sections: { title: string; items: Pair[] }[] = [
  { title: "作成", items: [["polySheet", "ポリゴンシート", "ellipse", "楕円"], ["circleSheet", "サークルシート", "ellArc", "楕円アーク"], ["line", "ライン", "polyline", "ポリライン"], ["circle", "サークル", "curve", "カーブ"], ["arc", "アーク", "point", "ポイント"]] },
  { title: "修正", items: [["move", "移動", "sweep", "スイープ"], ["rotate", "回転", "loft", "ロフト"], ["scale", "拡大縮小", "extend", "延長"], ["array", "配列コピー", "trim", "トリム"], ["mirror", "シェープの鏡面コピー", "sew", "ソーイング"], ["align", "整列", "cutWire", "ワイヤの分割"], ["unite", "結合", "fillet", "フィレット"], ["subtract", "差", "cutEdge", "エッジの分割"], ["intersect", "交差", "broom", "小さいエンティティの削除"], ["clip", "切り取り", "wrench", "クリーニング"], ["project", "投影", "gauge", "最適化"], ["imprint", "インプリント", "virtualMove", "仮想移動"], ["extrude", "シェープの押し出し"]] },
  { title: "割り当て", items: [["shapeProp", "シェーププロパティ", "heatBound", "熱流境界条件"], ["rebarProp", "埋め込み鉄筋プロパティ", "waterBound", "地下水境界条件"], ["sumProp", "合成要素プロパティ", "fixTemp", "固定温度"], ["load", "荷重の追加", "fixHead", "固定水頭"], ["globalLoad", "全体荷重", "initial", "初期場"], ["support", "拘束の追加", "timeDep", "環境の時間依存性"], ["connection", "コネクション", "waterLevel", "水位"], ["tying", "タイイング", "nodes", "節点グループ"]] },
  { title: "メッシュ", items: [["drum", "メッシュプロパティ", "corners", "マップドメッシュのコーナーを設定"], ["meshGrey", "メッシュ生成"]] },
];

/* ---------- status bar ---------- */
const StatusBar = styled.footer`
  flex: none;
  height: 29px;
  display: flex;
  align-items: center;
  justify-content: flex-end;
  gap: 2px;
  padding-right: 2px;
`;
const StatusText = styled.span`
  white-space: nowrap;
  padding: 0 10px;
`;
const Coords = styled.output`
  width: 33px;
  height: 24px;
  line-height: 22px;
  border: 1px solid #a0a0a0;
  border-right-color: #fff;
  border-bottom-color: #fff;
  text-align: center;
  white-space: nowrap;
`;
const Units = styled.span`
  display: flex;
  align-items: center;
  gap: 2px;
  padding: 0 8px 0 1px;
  white-space: nowrap;
`;
const SizeGrip = styled.svg`
  align-self: flex-end;
  margin: 0 0 2px 2px;
`;

const menus = ["ファイル(F)", "編集(E)", "メッシュ(M)", "解析(A)", "結果(R)", "レポート(R)", "ビューア(V)", "ウィンドウ(W)", "ヘルプ(H)"];

export default function App() {
  return (
    <Window>
      <GlobalStyle />
      <svg width="0" height="0" style={{ position: "absolute" }} aria-hidden="true">
        <defs>
          <linearGradient id="drumYellow"><stop offset="0" stopColor="#b09c18" /><stop offset=".4" stopColor="#e8d548" /><stop offset="1" stopColor="#9a8810" /></linearGradient>
          <linearGradient id="drumGrey"><stop offset="0" stopColor="#b5b5b5" /><stop offset=".4" stopColor="#dedede" /><stop offset="1" stopColor="#a8a8a8" /></linearGradient>
          <linearGradient id="sheetYellow"><stop offset="0" stopColor="#f4e25c" /><stop offset="1" stopColor="#c9b62c" /></linearGradient>
          <clipPath id="cubeFace"><path d="M2 5l8-3 12 1v14l-12 5-8-4z" /></clipPath>
        </defs>
      </svg>
      <TitleBar>
        <Icon name="logo" size={16} />
        <Caption>Diana Interactive Environment — RCBEAM1.dpf*</Caption>
        <CaptionButton aria-label="minimize"><Svg width="10" height="10"><path d="M0 5.500h10" stroke="#000" /></Svg></CaptionButton>
        <CaptionButton aria-label="maximize"><Svg width="10" height="10"><path d="M.500 .500h9v9h-9z" fill="none" stroke="#000" /></Svg></CaptionButton>
        <CaptionButton aria-label="close"><Svg width="10" height="10"><path d="M0 0l10 10M10 0L0 10" stroke="#000" /></Svg></CaptionButton>
      </TitleBar>
      <MenuBar>{menus.map((m) => <MenuItem key={m}>{m}</MenuItem>)}</MenuBar>
      {rows.map((groups, r) => (
        <Bar key={r} role="toolbar">
          {groups.map((g, i) => (
            <Group key={i} $last={i === groups.length - 1}>
              <Grip />
              {g.map((t, k) => <ToolItem key={k} t={t} />)}
            </Group>
          ))}
        </Bar>
      ))}
      <Main>
        <SideDock>
          <DockTitle><h2>結果</h2><DockButton aria-label="float"><FloatGlyph /></DockButton></DockTitle>
          <PanelTools>
            {["resOut", "*funnel", "|", "*resFault", "resDef", "*both", "bentOnly", "boxMesh", "boxOnly", "|", "play"].map((n, i) => {
              if (n === "|") return <Sep key={i} $h={16} />;
              const on = n[0] === "*";
              const name = on ? n.slice(1) : n;
              return <ToolButton key={i} $small $on={on} aria-label={name} aria-pressed={on}><Icon name={name} size={name === "play" ? 11 : 16} /></ToolButton>;
            })}
          </PanelTools>
          <Form>
            <label htmlFor="analysis">Analysis</label>
            <ComboBox><Select id="analysis" $h={20} disabled><option>RCBEAM1</option></Select><Chevron color="#a0a0a0" /></ComboBox>
            <label htmlFor="case">Case</label>
            <FieldRow>
              <ComboBox><Select id="case" $h={20}><option>Load-step 30, Load-factor 11.000, DISP</option></Select><Chevron /></ComboBox>
              <StepButton aria-label="previous case"><Icon name="left" size={16} /></StepButton>
              <StepButton aria-label="next case"><Icon name="right" size={16} /></StepButton>
            </FieldRow>
            <label htmlFor="layer">Layer</label>
            <ComboBox><Select id="layer" $h={20} disabled><option>レイヤー1 (計1レイヤー中)</option></Select><Chevron color="#a0a0a0" /></ComboBox>
          </Form>
          <Tree role="tree">
            {tree.map((n, i) => (
              <TreeRow key={i} $level={n.l} $tall={n.icon} role="treeitem" aria-expanded={n.leaf ? undefined : !!n.open} aria-selected={!!n.on}>
                <Branch>{!n.leaf && <Chevron weight={1.7} dir={n.open ? "down" : "right"} color={n.open ? "#404040" : "#a0a0a0"} />}</Branch>
                <TreeLabel $on={n.on} $icon={n.icon}>{n.icon && <Icon name="data" size={11} />}{n.t}</TreeLabel>
              </TreeRow>
            ))}
          </Tree>
          <Tabs role="tablist" $pad={2}>
            <Tab role="tab" $w={55}>メッシュ</Tab>
            <Tab role="tab" $w={46}>解析</Tab>
            <Tab role="tab" $w={51} $on aria-selected>結果</Tab>
            <Tab role="tab" $w={58}>レポート</Tab>
          </Tabs>
        </SideDock>

        <Dock>
          <Viewport>
            <Annotation>
              <div>RCBEAM1</div>
              <div>Load-step 30, Load-factor 11.000, DISP</div>
              <div>State Parameters - AVJSCE r=150.000 MM DI, mappedintpnt</div>
              <div>min: 5.10e-06 max: 3.20e-03</div>
            </Annotation>
            <Beam width="664" height="142" viewBox="384 340 664 142">
              <path d="M385.5 355.5h661v110h-661z" fill="#00f" />
              {bands.map(([c, p]) => <polygon key={c} points={p} fill={c} shapeRendering="crispEdges" />)}
              <path d={grid} fill="none" stroke="#a6a6a6" />
            </Beam>
            <Triad width="48" height="48" viewBox="428 554 48 48" fontFamily="Liberation Sans, sans-serif" fontSize="14">
              <path d="M433.500 594V572" stroke="#0f0" /><path d="M433.500 568l3 6h-6z" fill="#0a9a0a" />
              <path d="M433 594.500h22" stroke="#f00" /><path d="M459 594.500l-6-3v6z" fill="#b00" />
              <text x="435" y="568" fill="#2fe02f">Y</text>
              <text x="456" y="588" fill="#f33">X</text>
            </Triad>
            <Legend>
              <LegendTitle>DI</LegendTitle>
              <LegendBody>
                <Ramp>{["#f00", "#fc0", "#6f0", "#0f6", "#0cf", "#00f"].map((c) => <Swatch key={c} $c={c} />)}</Ramp>
                <LegendLabels>
                  {["2.00e-03", "1.00e-03", "7.50e-04", "5.00e-04", "2.50e-04", "1.00e-04", "0.00e+00"].map((v) => <span key={v}>{v}</span>)}
                </LegendLabels>
              </LegendBody>
            </Legend>
          </Viewport>
          <MessagePanel>
            <DockTitle $tall>
              <h2>メッセージ</h2>
              <DockButton aria-label="float"><FloatGlyph /></DockButton>
              <DockButton aria-label="close"><CrossGlyph /></DockButton>
            </DockTitle>
            <MessageTools>
              {["broomOff", "saveOff", "|", "leftOff", "rightOff"].map((n, i) =>
                n === "|" ? <Sep key={i} $h={16} /> : <ToolButton key={i} $small disabled aria-label={n}><Icon name={n} size={16} /></ToolButton>
              )}
            </MessageTools>
            <MessageText aria-label="メッセージ" readOnly />
            <Tabs role="tablist">
              <Tab role="tab" $w={70} $on aria-selected>メッセージ</Tab>
              <Tab role="tab" $w={101}>コマンドコンソール</Tab>
            </Tabs>
          </MessagePanel>
        </Dock>

        <SideDock>
          <DockTitle>
            <h2>アクション</h2>
            <DockButton aria-label="float"><FloatGlyph /></DockButton>
            <DockButton aria-label="close"><CrossGlyph /></DockButton>
          </DockTitle>
          <ActionBody>
            <ActionList>
              {sections.map((s) => (
                <section key={s.title}>
                  <SectionTitle>{s.title}</SectionTitle>
                  <ActionGrid>
                    {s.items.map(([i1, t1, i2, t2]) => (
                      <React.Fragment key={t1}>
                        <Action disabled={t1 === "メッシュ生成"}><Icon name={i1} size={16} />{t1}</Action>
                        {i2 ? <Action><Icon name={i2} size={16} />{t2}</Action> : <span />}
                      </React.Fragment>
                    ))}
                  </ActionGrid>
                </section>
              ))}
            </ActionList>
            <ScrollBar>
              <ScrollButton aria-label="scroll up"><Chevron weight={1.7} dir="up" /></ScrollButton>
              <ScrollTrack><Thumb /></ScrollTrack>
              <ScrollButton aria-label="scroll down"><Chevron weight={1.7} /></ScrollButton>
            </ScrollBar>
          </ActionBody>
          <Tabs role="tablist" $pad={2}>
            <Tab role="tab" $w={64}>プロパティ</Tab>
            <Tab role="tab" $w={67} $on aria-selected>アクション</Tab>
          </Tabs>
        </SideDock>
      </Main>
      <StatusBar>
        <Icon name="done" size={16} />
        <StatusText>終了しました: RCBEAM1</StatusText>
        <Icon name="tableOff" size={16} />
        <Sep $h={24} />
        <Coords>--. --</Coords>
        <Sep $h={24} />
        <Units><Icon name="weight" size={16} />単位:ユーザー定義</Units>
        <Sep $h={24} />
        <SizeGrip width="9" height="9"><path d="M6 0h2v2h-2zM3 3h2v2H3zM6 3h2v2H6zM0 6h2v2H0zM3 6h2v2H3zM6 6h2v2H6z" fill="#b0b0b0" /></SizeGrip>
      </StatusBar>
    </Window>
  );
}
